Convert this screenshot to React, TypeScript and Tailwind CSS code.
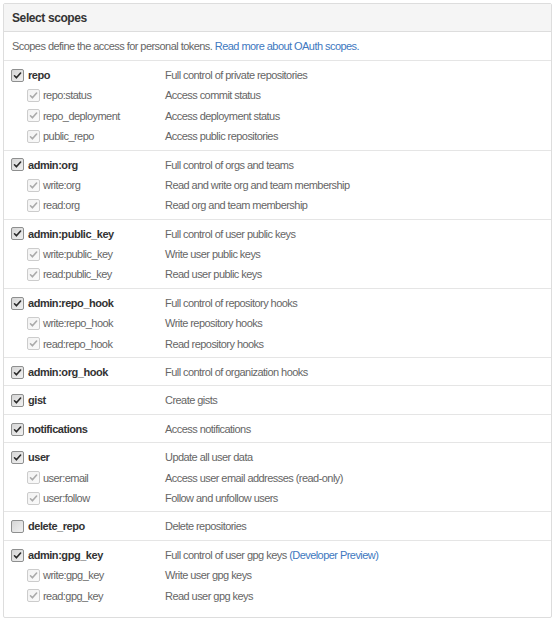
import React from "react";

type Scope = {
  name: string;
  desc: string;
  checked?: boolean;
  preview?: boolean;
  children?: { name: string; desc: string }[];
};

const scopes: Scope[] = [
  {
    name: "repo",
    desc: "Full control of private repositories",
    checked: true,
    children: [
      { name: "repo:status", desc: "Access commit status" },
      { name: "repo_deployment", desc: "Access deployment status" },
      { name: "public_repo", desc: "Access public repositories" },
    ],
  },
  {
    name: "admin:org",
    desc: "Full control of orgs and teams",
    checked: true,
    children: [
      { name: "write:org", desc: "Read and write org and team membership" },
      { name: "read:org", desc: "Read org and team membership" },
    ],
  },
  {
    name: "admin:public_key",
    desc: "Full control of user public keys",
    checked: true,
    children: [
      { name: "write:public_key", desc: "Write user public keys" },
      { name: "read:public_key", desc: "Read user public keys" },
    ],
  },
  {
    name: "admin:repo_hook",
    desc: "Full control of repository hooks",
    checked: true,
    children: [
      { name: "write:repo_hook", desc: "Write repository hooks" },
      { name: "read:repo_hook", desc: "Read repository hooks" },
    ],
  },
  { name: "admin:org_hook", desc: "Full control of organization hooks", checked: true },
  { name: "gist", desc: "Create gists", checked: true },
  { name: "notifications", desc: "Access notifications", checked: true },
  {
    name: "user",
    desc: "Update all user data",
    checked: true,
    children: [
      { name: "user:email", desc: "Access user email addresses (read-only)" },
      { name: "user:follow", desc: "Follow and unfollow users" },
    ],
  },
  { name: "delete_repo", desc: "Delete repositories", checked: false },
  {
    name: "admin:gpg_key",
    desc: "Full control of user gpg keys",
    checked: true,
    preview: true,
    children: [
      { name: "write:gpg_key", desc: "Write user gpg keys" },
      { name: "read:gpg_key", desc: "Read user gpg keys" },
    ],
  },
];

function Box({ checked, disabled }: { checked: boolean; disabled?: boolean }) {
  const border = disabled ? "#cccccc" : "#8e8f8f";
  const mark = disabled ? "#aaaaaa" : "#2a2a2a";
  return (
    <svg width="13" height="13" viewBox="0 0 13 13" className="shrink-0">
      <defs>
        <linearGradient id={disabled ? "gd" : "ge"} x1="0" y1="0" x2="1" y2="1">
          <stop offset="0" stopColor={disabled ? "#f2f2f2" : "#d4d4d4"} />
          <stop offset="1" stopColor={disabled ? "#fafafa" : "#f2f2f2"} />
        </linearGradient>
      </defs>
      <rect x="0.5" y="0.5" width="12" height="12" rx="1.5" fill={`url(#${disabled ? "gd" : "ge"})`} stroke={border} />
      {checked && (
        <path d="M3.5 6.8 L5.4 8.8 L9.6 4" fill="none" stroke={mark} strokeWidth="1.6" strokeLinecap="round" strokeLinejoin="round" />
      )}
    </svg>
  );
}

export default function App() {
  return (
    <div className="p-[3px] bg-white" style={{ fontFamily: '"Liberation Sans", Arial, sans-serif' }}>
      <div className="w-[549px] h-[615px] border border-[#dddddd] rounded-[2px] text-[11px] tracking-[-0.55px]">
        <div className="h-[28px] bg-[#f5f5f5] border-b border-[#dddddd] flex items-center px-[8px]">
          <span className="font-bold text-[12px] tracking-[-0.4px] text-[#333]">Select scopes</span>
        </div>
        <div className="h-[28px] flex items-center px-[8px] text-[#666]">
          Scopes define the access for personal tokens.&nbsp;
          <a className="text-[#4078c0]">Read more about OAuth scopes.</a>
        </div>
        {scopes.map((s) => (
          <div key={s.name} className="border-t border-[#e5e5e5] pt-[4px] pb-[3px]">
            <div className="h-[20.4px] flex items-center">
              <div className="w-[161px] flex items-center pl-[7px] gap-[4px]">
                <Box checked={!!s.checked} />
                <span className="font-bold text-[#333] tracking-[-0.45px]">{s.name}</span>
              </div>
              <span className="text-[#666]">
                {s.desc}
                {s.preview && <span className="text-[#4078c0]"> (Developer Preview)</span>}
              </span>
            </div>
            {s.children?.map((c) => (
              <div key={c.name} className="h-[20.4px] flex items-center">
                <div className="w-[161px] flex items-center pl-[23px] gap-[3px]">
                  <Box checked disabled />
                  <span className="text-[#666]">{c.name}</span>
                </div>
                <span className="text-[#666]">{c.desc}</span>
              </div>
            ))}
          </div>
        ))}
      </div>
    </div>
  );
}
